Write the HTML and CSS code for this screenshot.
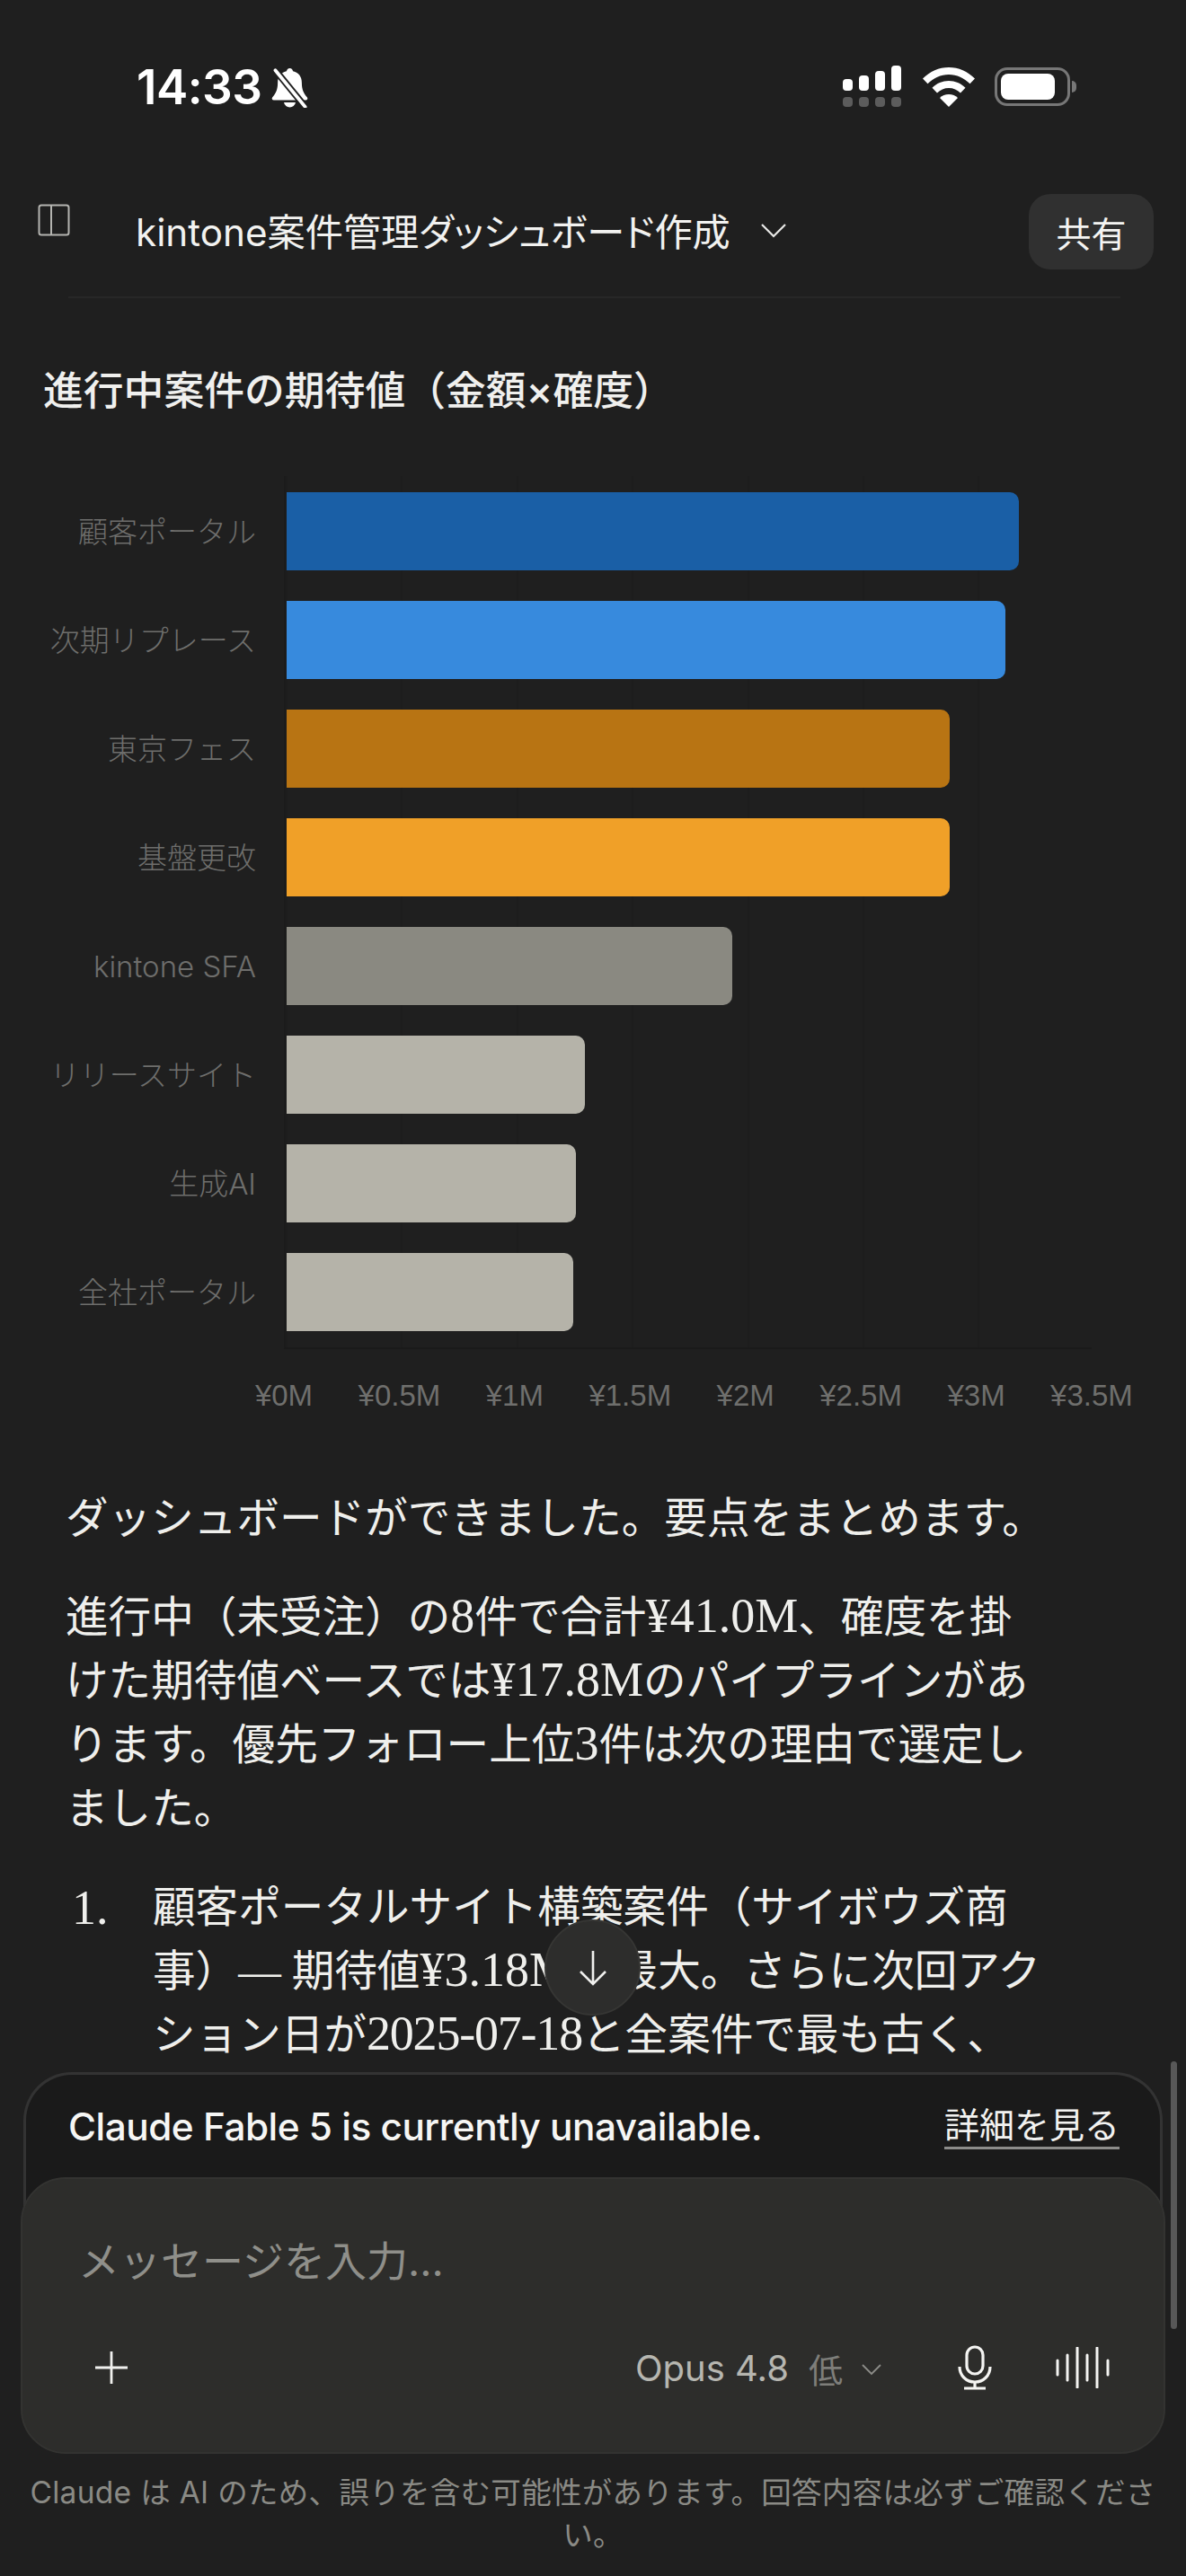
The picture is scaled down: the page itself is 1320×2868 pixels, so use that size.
FILE: index.html
```html
<!DOCTYPE html>
<html lang="ja">
<head>
    <meta charset="UTF-8">
    <meta name="viewport" content="width=device-width, initial-scale=1.0">
    <title>kintone案件管理ダッシュボード作成</title>
    <link rel="stylesheet" href="styles.css">
</head>
<body>
<div class="page">

    <!-- Status bar -->
    <div class="status-bar">
        <div class="status-left">
            <span class="clock">14:33</span>
            <svg class="bell" viewBox="3 0 40 42" width="43" height="45">
                <path d="M23 1c-2 0-3 1.200-3.300 3C13.500 5.500 10.500 10 10.500 16c0 7-2 11-5.500 15-1 1.200-.5 3 1.500 3h33c2 0 2.500-1.800 1.500-3-3.500-4-5.500-8-5.500-15 0-6-3-10.500-9.200-12C26 2.200 25 1 23 1z" fill="#fff"/>
                <path d="M17 36.500h12c-.6 3-3 5-6 5s-5.400-2-6-5z" fill="#fff"/>
                <path d="M8 3l31 38" stroke="#1f1f1f" stroke-width="7"/>
                <path d="M8 3l31 38" stroke="#fff" stroke-width="3.500" stroke-linecap="round"/>
            </svg>
        </div>
        <div class="status-right">
            <svg viewBox="0 0 66 48" width="66" height="48">
                <rect x="0" y="15" width="11" height="13" rx="4" fill="#fff"/>
                <rect x="18" y="11" width="11" height="17" rx="4" fill="#fff"/>
                <rect x="36" y="6" width="11" height="22" rx="4" fill="#fff"/>
                <rect x="54" y="0" width="11" height="28" rx="4" fill="#fff"/>
                <rect x="0" y="35" width="11" height="11" rx="4" fill="#5c5c5c"/>
                <rect x="18" y="35" width="11" height="11" rx="4" fill="#5c5c5c"/>
                <rect x="36" y="35" width="11" height="11" rx="4" fill="#5c5c5c"/>
                <rect x="54" y="35" width="11" height="11" rx="4" fill="#5c5c5c"/>
            </svg>
            <svg class="wifi" viewBox="0 0 58 44" width="58" height="44">
                <path d="M29 0C18 0 8 4.500 0 12.500l5.500 5.800C12 12 20 8 29 8s17 4 23.500 10.300l5.500-5.800C50 4.500 40 0 29 0z" fill="#fff"/>
                <path d="M29 15c-7 0-13.500 2.800-18.500 7.700l5.500 5.800c3.500-3.500 8-5.500 13-5.500s9.500 2 13 5.500l5.500-5.800C42.500 17.800 36 15 29 15z" fill="#fff"/>
                <path d="M29 30c-4 0-7.500 1.500-10 4l10 10 10-10c-2.500-2.500-6-4-10-4z" fill="#fff"/>
            </svg>
            <div class="battery">
                <div class="battery-body"><div class="battery-fill"></div></div>
                <div class="battery-cap"></div>
            </div>
        </div>
    </div>

    <!-- Conversation header -->
    <header class="topbar">
        <svg class="sidebar-icon" viewBox="0 0 36 36" width="36" height="36">
            <rect x="1.500" y="1.500" width="33" height="33" rx="2.500" fill="none" stroke="#b4b4b0" stroke-width="2"/>
            <path d="M15 1.500v33" stroke="#b4b4b0" stroke-width="2"/>
        </svg>
        <div class="title-wrap">
            <span class="title">kintone案件管理ダッシュボード作成</span>
            <svg class="title-chevron" viewBox="0 0 30 18" width="30" height="18">
                <path d="M2 3l13 13L28 3" fill="none" stroke="#e8e8e6" stroke-width="2.200"/>
            </svg>
        </div>
        <button class="share-btn">共有</button>
    </header>

    <main class="content">
        <h2 class="chart-title">進行中案件の期待値（金額×確度）</h2>

        <div class="chart">
            <div class="plot">
                <div class="row"><span class="row-label">顧客ポータル</span><div class="bar bar-navy" style="width:815px"></div></div>
                <div class="row"><span class="row-label">次期リプレース</span><div class="bar bar-blue" style="width:800px"></div></div>
                <div class="row"><span class="row-label">東京フェス</span><div class="bar bar-brown" style="width:738px"></div></div>
                <div class="row"><span class="row-label">基盤更改</span><div class="bar bar-orange" style="width:738px"></div></div>
                <div class="row"><span class="row-label">kintone SFA</span><div class="bar bar-grey" style="width:496px"></div></div>
                <div class="row"><span class="row-label">リリースサイト</span><div class="bar bar-light" style="width:332px"></div></div>
                <div class="row"><span class="row-label">生成AI</span><div class="bar bar-light" style="width:322px"></div></div>
                <div class="row"><span class="row-label">全社ポータル</span><div class="bar bar-light" style="width:319px"></div></div>
            </div>
            <div class="x-axis">
                <span>¥0M</span><span>¥0.5M</span><span>¥1M</span><span>¥1.5M</span><span>¥2M</span><span>¥2.5M</span><span>¥3M</span><span>¥3.5M</span>
            </div>
        </div>

        <div class="message">
            <p>ダッシュボードができました。要点をまとめます。</p>
            <p>進行中（未受注）の<span class="lat">8</span>件で合計<span class="lat">¥41.0M</span>、確度を掛<br>けた期待値ベースでは<span class="lat">¥17.8M</span>のパイプラインがあ<br>ります。優先フォロー上位<span class="lat">3</span>件は次の理由で選定し<br>ました。</p>
            <div class="list-item">
                <span class="list-num">1.</span>
                <div>顧客ポータルサイト構築案件（サイボウズ商<br>事）— 期待値<span class="lat">¥3.18M</span>で最大。さらに次回アク<br>ション日が<span class="lat date">2025-07-18</span>と全案件で最も古く、</div>
            </div>
        </div>
    </main>

    <!-- Floating items over the conversation -->
    <button class="scroll-down">
        <svg viewBox="0 0 34 42" width="34" height="42">
            <path d="M17 2v37M3 25l14 14 14-14" fill="none" stroke="#f0f0ee" stroke-width="2.600"/>
        </svg>
    </button>
    <div class="scrollbar"></div>

    <!-- Composer -->
    <section class="composer">
        <div class="notice-card">
            <div class="notice">
                <span class="notice-text">Claude Fable 5 is currently unavailable.</span>
                <a class="notice-link" href="#details">詳細を見る</a>
            </div>
            <div class="input-card">
                <div class="placeholder">メッセージを入力…</div>
                <div class="toolbar">
                    <svg class="plus" viewBox="0 0 38 38" width="38" height="38">
                        <path d="M19 1v36M1 19h36" stroke="#f0f0ee" stroke-width="2.800"/>
                    </svg>
                    <span class="model">Opus 4.8</span>
                    <span class="effort">低</span>
                    <svg class="model-chevron" viewBox="0 0 24 14" width="24" height="14">
                        <path d="M2 2l10 10L22 2" fill="none" stroke="#8c8c88" stroke-width="1.800"/>
                    </svg>
                    <svg class="mic" viewBox="0 0 38 50" width="38" height="50">
                        <rect x="10" y="2" width="18" height="30" rx="9" fill="none" stroke="#f4f4f2" stroke-width="3.200"/>
                        <path d="M2 24c0 10 7.500 17 17 17s17-7 17-17M19 41v7M7 48h24" fill="none" stroke="#f4f4f2" stroke-width="3.200"/>
                    </svg>
                    <svg class="wave" viewBox="0 0 60 46" width="60" height="46">
                        <path d="M2 15v16M13 9v28M24 1v44M35 9v28M46 1v44M58 15v16" stroke="#f4f4f2" stroke-width="3" stroke-linecap="round"/>
                    </svg>
                </div>
            </div>
        </div>
        <p class="disclaimer">Claude は AI のため、誤りを含む可能性があります。回答内容は必ずご確認ください。</p>
    </section>

</div>
</body>
</html>
```

FILE: styles.css
```css
/* Page */
html, body {
    margin: 0;
    padding: 0;
}

body {
    background-color: #1f1f1f;
    color: #f0f0ee;
    font-family: Inter, "Noto Sans CJK JP", sans-serif;
}

.page {
    position: relative;
    width: 1320px;
    height: 2868px;
    display: flex;
    flex-direction: column;
    overflow: hidden;
}

/* Status bar */
.status-bar {
    flex: none;
    height: 190px;
    display: flex;
    justify-content: space-between;
    align-items: flex-start;
    padding: 0 122px 0 152px;
    box-sizing: border-box;
}

.status-left {
    display: flex;
    align-items: center;
    gap: 9px;
    padding-top: 66px;
}

.clock {
    font-size: 53px;
    line-height: 62px;
    font-weight: 600;
    letter-spacing: -0.5px;
    color: #fff;
}

.status-right {
    display: flex;
    align-items: flex-start;
    padding-top: 73px;
}

.wifi {
    margin: 2px 0 0 23px;
}

.battery {
    display: flex;
    align-items: center;
    margin: 2px 0 0 22px;
}

.battery-body {
    width: 84px;
    height: 43px;
    padding: 4px;
    border: 3px solid #777;
    border-radius: 14px;
    box-sizing: border-box;
}

.battery-fill {
    width: 60px;
    height: 29px;
    background-color: #fff;
    border-radius: 8px;
}

.battery-cap {
    width: 5px;
    height: 13px;
    margin-left: 2px;
    background-color: #777;
    border-radius: 0 5px 5px 0;
}

/* Conversation header */
.topbar {
    flex: none;
    height: 142px;
    display: flex;
    align-items: center;
    margin: 0 73px 0 76px;
    position: relative;
    border-bottom: 2px solid #272727;
    box-sizing: border-box;
}

.sidebar-icon {
    position: absolute;
    left: -34px;
    top: 37px;
}

.title-wrap {
    flex: 1;
    display: flex;
    align-items: center;
    gap: 33px;
    padding-left: 75px;
    margin-top: -9px;
}

.title {
    font-size: 42.200px;
    font-feature-settings: "palt";
    color: #f2f2f0;
}

.share-btn {
    position: absolute;
    right: -37px;
    top: 26px;
    width: 139px;
    height: 84px;
    padding: 0;
    border: none;
    border-radius: 24px;
    background-color: #303030;
    color: #f4f4f2;
    font-family: inherit;
    font-size: 39px;
}

/* Conversation */
.content {
    flex: 1;
    min-height: 0;
    overflow: hidden;
}

.chart-title {
    margin: 72px 0 0 48px;
    font-size: 44.800px;
    line-height: 62px;
    font-weight: 500;
    color: #f0f0ee;
}

/* Chart */
.chart {
    margin-top: 64px;
}

.plot {
    margin-left: 316px;
    width: 899px;
    padding: 18px 0;
    display: flex;
    flex-direction: column;
    gap: 34px;
    border-left: 2px solid #1b1b1b;
    border-bottom: 2px solid #1a1a1a;
    box-sizing: border-box;
    background-image: repeating-linear-gradient(to right, #1d1d1d 0, #1d1d1d 2px, transparent 2px, transparent 128.400px);
}

.row {
    position: relative;
    height: 87px;
    padding-left: 1px;
}

.row-label {
    position: absolute;
    right: calc(100% + 33px);
    top: 1px;
    line-height: 87px;
    white-space: nowrap;
    font-size: 33px;
    font-weight: 300;
    color: #6e6e6c;
}

.bar {
    height: 87px;
    border-radius: 0 10px 10px 0;
}

.bar-navy { background-color: #1a5fa6; }
.bar-blue { background-color: #378add; }
.bar-brown { background-color: #b87413; }
.bar-orange { background-color: #f0a028; }
.bar-grey { background-color: #8a8981; }
.bar-light { background-color: #b5b3a9; }

.x-axis {
    display: flex;
    justify-content: space-between;
    width: 963px;
    margin: 30px 0 0 284px;
    font-family: "Liberation Sans", sans-serif;
    font-size: 33px;
    line-height: 44px;
    color: #6f6f6d;
}

.x-axis span {
    flex: 0 0 64px;
    min-width: 0;
    display: flex;
    justify-content: center;
    white-space: nowrap;
}

/* Assistant message */
.message {
    margin: 80px 0 0 73px;
    width: 1120px;
    font-family: "Liberation Serif", "Noto Sans CJK JP", serif;
    font-size: 47.600px;
    line-height: 71px;
    color: #efefec;
}

.message p {
    margin: 0 0 39px;
}

/* Latin runs are set larger than the kana around them */
.lat {
    font-size: 54px;
    line-height: 0;
}

.date {
    letter-spacing: -1.200px;
}

.list-item {
    display: flex;
}

.list-num {
    flex: 0 0 97px;
    padding-left: 7px;
    box-sizing: border-box;
    font-size: 54px;
}

/* Floating items */
.scroll-down {
    position: absolute;
    left: 606px;
    top: 2137px;
    width: 107px;
    height: 107px;
    display: flex;
    align-items: center;
    justify-content: center;
    padding: 0;
    border: 2px solid #363634;
    border-radius: 50%;
    background-color: #2d2d2c;
}

.scrollbar {
    position: absolute;
    left: 1303px;
    top: 2295px;
    width: 7px;
    height: 298px;
    border-radius: 4px;
    background-color: #585858;
    z-index: 2;
}

/* Composer */
.composer {
    flex: none;
    padding-bottom: 22px;
}

.notice-card {
    margin: 0 26px;
    background-color: #1a1a1a;
    border: 3px solid #333;
    border-bottom: none;
    border-radius: 54px 54px 50px 50px;
}

.notice {
    height: 114px;
    display: flex;
    align-items: center;
    justify-content: space-between;
    padding: 0 45px 0 47px;
}

.notice-text {
    font-size: 42.300px;
    font-weight: 500;
    letter-spacing: -0.5px;
    color: #f6f6f4;
}

.notice-link {
    font-size: 39px;
    color: #f2f2f0;
    text-decoration: none;
    border-bottom: 3px solid #8c8c8a;
    line-height: 48px;
}

.input-card {
    margin: 0 -6px;
    height: 308px;
    padding-top: 60px;
    box-sizing: border-box;
    background-color: #2d2d2b;
    border-radius: 50px;
    border: 2px solid #333331;
    display: flex;
    flex-direction: column;
}

.placeholder {
    margin-left: 62px;
    font-size: 46px;
    line-height: 62px;
    color: #8f8f8a;
}

.toolbar {
    display: flex;
    align-items: center;
    margin-top: 62px;
    padding: 0 60px 0 80px;
    height: 52px;
}

.plus {
    margin-right: auto;
}

.model {
    font-size: 40px;
    color: #b6b6b0;
}

.effort {
    margin-left: 22px;
    font-size: 38px;
    color: #7e7e7a;
}

.model-chevron {
    margin: 4px 0 0 20px;
}

.mic {
    margin-left: 84px;
}

.wave {
    margin-left: 71px;
}

.disclaimer {
    margin: 20px 20px 0;
    font-size: 33.500px;
    line-height: 47px;
    text-align: center;
    letter-spacing: 0.3px;
    color: #8a8a85;
}
```
